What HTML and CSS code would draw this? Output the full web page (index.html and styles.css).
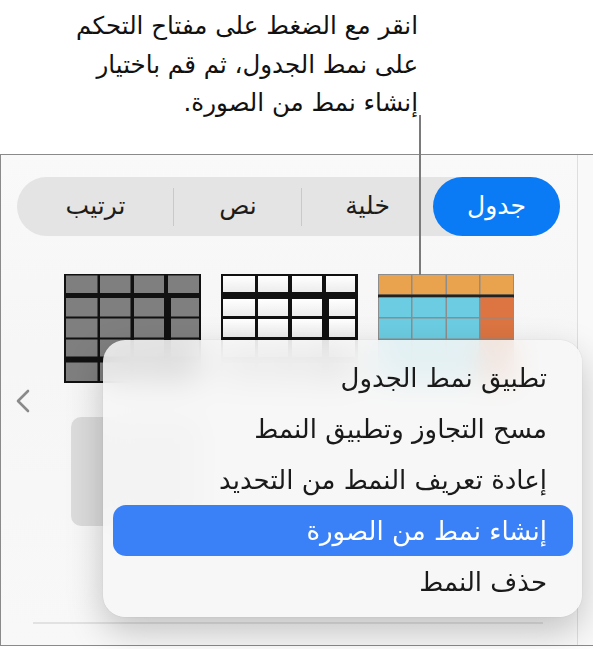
FILE: index.html
```html
<!DOCTYPE html>
<html lang="ar" dir="rtl">
<head>
    <meta charset="UTF-8">
    <title>إنشاء نمط من الصورة</title>
    <link rel="stylesheet" href="styles.css">
</head>
<body>
<div class="page">

    <!-- callout -->
    <p class="callout">انقر مع الضغط على مفتاح التحكم<br>على نمط الجدول، ثم قم باختيار<br>إنشاء نمط من الصورة.</p>
    <div class="leader"></div>

    <!-- inspector panel -->
    <div class="panel">
        <div class="inspector">
            <div class="tabs">
                <span class="tab active">جدول</span>
                <span class="tab">خلية</span>
                <span class="tab sep">نص</span>
                <span class="tab sep">ترتيب</span>
            </div>

            <div class="styles">
                <svg class="thumb" width="136" height="109" viewBox="0 0 136 109">
                    <rect width="136" height="109" fill="#8d8d8d"/>
                    <g fill="#e9a24e">
                        <rect x="1" y="1" width="32" height="19.5"/>
                        <rect x="34.5" y="1" width="33" height="19.5"/>
                        <rect x="69" y="1" width="32" height="19.5"/>
                        <rect x="102.5" y="1" width="32.5" height="19.5"/>
                    </g>
                    <rect x="0" y="20.5" width="136" height="3" fill="#222"/>
                    <g fill="#6ccde2">
                        <rect x="1" y="23.5" width="32" height="19.5"/>
                        <rect x="34.5" y="23.5" width="33" height="19.5"/>
                        <rect x="69" y="23.5" width="32" height="19.5"/>
                        <rect x="1" y="44.5" width="32" height="20"/>
                        <rect x="34.5" y="44.5" width="33" height="20"/>
                        <rect x="69" y="44.5" width="32" height="20"/>
                        <rect x="1" y="66" width="32" height="20"/>
                        <rect x="34.5" y="66" width="33" height="20"/>
                        <rect x="69" y="66" width="32" height="20"/>
                        <rect x="1" y="87.5" width="32" height="20.5"/>
                        <rect x="34.5" y="87.5" width="33" height="20.5"/>
                        <rect x="69" y="87.5" width="32" height="20.5"/>
                    </g>
                    <g fill="#dc7542">
                        <rect x="102.5" y="23.5" width="32.5" height="19.5"/>
                        <rect x="102.5" y="44.5" width="32.5" height="20"/>
                        <rect x="102.5" y="66" width="32.5" height="20"/>
                        <rect x="102.5" y="87.5" width="32.5" height="20.5"/>
                    </g>
                </svg>

                <svg class="thumb" width="137" height="109" viewBox="0 0 137 109">
                    <defs>
                        <linearGradient id="cellWhite" x1="0" y1="0" x2="0" y2="1">
                            <stop offset="0" stop-color="#ffffff"/>
                            <stop offset="1" stop-color="#ececec"/>
                        </linearGradient>
                    </defs>
                    <rect width="137" height="109" fill="#111"/>
                    <g fill="url(#cellWhite)">
                        <rect x="2" y="2" width="32" height="16"/>
                        <rect x="37" y="2" width="30" height="16"/>
                        <rect x="71" y="2" width="30" height="16"/>
                        <rect x="105" y="2" width="29" height="16"/>
                        <rect x="2" y="25" width="32" height="17"/>
                        <rect x="37" y="25" width="30" height="17"/>
                        <rect x="71" y="25" width="30" height="17"/>
                        <rect x="108" y="25" width="26" height="17"/>
                        <rect x="2" y="45" width="32" height="18"/>
                        <rect x="37" y="45" width="30" height="18"/>
                        <rect x="71" y="45" width="30" height="18"/>
                        <rect x="108" y="45" width="26" height="18"/>
                        <rect x="2" y="66" width="32" height="17"/>
                        <rect x="37" y="66" width="30" height="17"/>
                        <rect x="71" y="66" width="30" height="17"/>
                        <rect x="108" y="66" width="26" height="17"/>
                        <rect x="2" y="89" width="32" height="18"/>
                        <rect x="37" y="89" width="30" height="18"/>
                        <rect x="71" y="89" width="30" height="18"/>
                        <rect x="108" y="89" width="26" height="18"/>
                    </g>
                </svg>

                <svg class="thumb" width="137" height="109" viewBox="0 0 137 109">
                    <rect width="137" height="109" fill="#111"/>
                    <g fill="#7f7f7f">
                        <rect x="2" y="1.5" width="31.5" height="17.5"/>
                        <rect x="36" y="1.5" width="30.5" height="17.5"/>
                        <rect x="70" y="1.5" width="30" height="17.5"/>
                        <rect x="104" y="1.5" width="31" height="17.5"/>
                        <rect x="2" y="24" width="31.5" height="18.5"/>
                        <rect x="36" y="24" width="30.5" height="18.5"/>
                        <rect x="70" y="24" width="30" height="18.5"/>
                        <rect x="107" y="24" width="28" height="18.5"/>
                        <rect x="2" y="44.5" width="31.5" height="19"/>
                        <rect x="36" y="44.5" width="30.5" height="19"/>
                        <rect x="70" y="44.5" width="30" height="19"/>
                        <rect x="107" y="44.5" width="28" height="19"/>
                        <rect x="2" y="65.5" width="31.5" height="17"/>
                        <rect x="36" y="65.5" width="30.5" height="17"/>
                        <rect x="70" y="65.5" width="30" height="17"/>
                        <rect x="107" y="65.5" width="28" height="17"/>
                        <rect x="2" y="88.5" width="31.5" height="18.5"/>
                        <rect x="36" y="88.5" width="30.5" height="18.5"/>
                        <rect x="70" y="88.5" width="30" height="18.5"/>
                        <rect x="107" y="88.5" width="28" height="18.5"/>
                    </g>
                </svg>
            </div>

            <div class="pager">
                <svg class="chevron" width="16" height="24" viewBox="0 0 16 24">
                    <polyline points="13,2 3,12 13,22" fill="none" stroke="#8a8a8a" stroke-width="2.6" stroke-linecap="round" stroke-linejoin="round"/>
                </svg>
                <div class="swatch"></div>
            </div>

            <div class="rule"></div>
        </div>
        <div class="scroller"></div>
    </div>

    <!-- context menu -->
    <ul class="menu">
        <li>تطبيق نمط الجدول</li>
        <li>مسح التجاوز وتطبيق النمط</li>
        <li>إعادة تعريف النمط من التحديد</li>
        <li class="selected">إنشاء نمط من الصورة</li>
        <li>حذف النمط</li>
    </ul>

</div>
</body>
</html>
```

FILE: styles.css
```css
/* --- General --- */
html, body {
    margin: 0;
    padding: 0;
    background: #fff;
}

body {
    font-family: "DejaVu Sans", sans-serif;
    color: #111;
}

.page {
    position: relative;
    width: 593px;
    height: 649px;
    overflow: hidden;
}

/* --- Callout --- */
.callout {
    margin: 0;
    height: 154px;
    box-sizing: border-box;
    padding: 7px 175px 0 0;
    font-size: 24.5px;
    line-height: 38.5px;
    color: #111;
}

.leader {
    position: absolute;
    left: 419px;
    top: 115px;
    width: 2px;
    height: 160px;
    background: #7a7a7a;
}

/* --- Inspector panel --- */
.panel {
    display: flex;
    direction: ltr;
    height: 492px;
    box-sizing: border-box;
    border-top: 1px solid #8a8a8a;
    border-bottom: 1px solid #8a8a8a;
    border-left: 1px solid #8a8a8a;
    background: linear-gradient(#f9f9f9, #f6f6f6 40%, #f8f8f8);
}

.inspector {
    width: 576px;
    display: flex;
    flex-direction: column;
}

.scroller {
    flex: 1;
    border-left: 1px solid #dedede;
    background: #f9f9f9;
}

.tabs {
    direction: rtl;
    display: grid;
    grid-template-columns: 127px 131px 128px 1fr;
    margin: 22px 17px 0 16px;
    height: 59px;
    border-radius: 30px;
    background: #e4e4e4;
}

.tab {
    position: relative;
    display: flex;
    align-items: center;
    justify-content: center;
    font-size: 25px;
    color: #1c1c1c;
    padding-bottom: 2px;
}

.tab.active {
    background: #0a7bf5;
    color: #fff;
    border-radius: 30px;
}

.tab.sep::before {
    content: "";
    position: absolute;
    right: 0;
    top: 11px;
    bottom: 10px;
    width: 1px;
    background: #c9c9c9;
}

.styles {
    direction: rtl;
    display: flex;
    justify-content: center;
    gap: 20px;
    margin-top: 38px;
    height: 109px;
}

.thumb {
    display: block;
}

.pager {
    display: flex;
    align-items: flex-start;
    padding-left: 14px;
    height: 143px;
}

.chevron {
    margin-top: 6px;
    display: block;
}

.swatch {
    margin: 34px 0 0 40px;
    width: 130px;
    height: 109px;
    border-radius: 10px;
    background: #dcdcdc;
}

.rule {
    margin: 96px 0 0 32px;
    width: 510px;
    height: 2px;
    background: #e2e2e2;
}

/* --- Context menu --- */
.menu {
    position: absolute;
    left: 103px;
    top: 340px;
    width: 479px;
    height: 277px;
    box-sizing: border-box;
    margin: 0;
    padding: 12px 9px 10px 10px;
    list-style: none;
    border-radius: 22px;
    background: rgba(247, 247, 247, 0.86);
    backdrop-filter: blur(14px);
    box-shadow: 0 0 1px rgba(0, 0, 0, 0.25), 0 14px 36px rgba(0, 0, 0, 0.22);
}

.menu li {
    height: 51px;
    display: flex;
    align-items: center;
    padding-right: 26px;
    font-size: 26px;
    color: #1a1a1a;
    border-radius: 13px;
}

.menu li.selected {
    background: #3a80f7;
    color: #fff;
}
```
